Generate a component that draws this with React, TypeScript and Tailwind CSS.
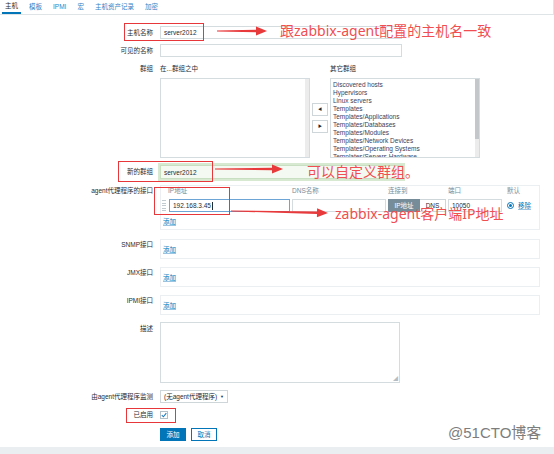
import React from "react";

const sans = "font-['Liberation_Sans','Noto_Sans_CJK_SC',sans-serif]";
const note = "font-['Noto_Sans','Noto_Sans_CJK_SC',sans-serif]";

const tabs = ["主机", "模板", "IPMI", "宏", "主机资产记录", "加密"];

const otherGroups = [
  "Discovered hosts",
  "Hypervisors",
  "Linux servers",
  "Templates",
  "Templates/Applications",
  "Templates/Databases",
  "Templates/Modules",
  "Templates/Network Devices",
  "Templates/Operating Systems",
  "Templates/Servers Hardware",
  "Templates/Virtualization",
];

const inputCls =
  "h-[13px] border border-[#d5dce0] bg-white px-[3px] text-[6.5px] text-[#1f2c33] outline-none";

const Row: React.FC<{
  label: React.ReactNode;
  labelClass?: string;
  className?: string;
  children: React.ReactNode;
}> = ({ label, labelClass = "", className = "", children }) => (
  <div className={`flex ${className}`}>
    <div className={`w-[153px] shrink-0 whitespace-nowrap text-right ${labelClass}`}>
      {label}
    </div>
    <div className="ml-[7px] min-w-0 flex-1">{children}</div>
  </div>
);

const AddLink = () => (
  <span className="text-[#0275b8] underline decoration-[#9cc4e0]">添加</span>
);

const EmptyIface = () => (
  <div className="w-[380px] border border-[#eceff1] pb-[4px] pl-[2px] pt-[6px]">
    <AddLink />
  </div>
);

const ListBox: React.FC<{ items: string[]; thumb?: boolean }> = ({ items, thumb }) => (
  <div className="flex h-[80px] w-[150px] border border-[#d5dce0] bg-white">
    <div className="flex-1 overflow-hidden pl-[2px] pt-[2px] text-[#3a3f5c]">
      {items.map((g) => (
        <div key={g} className="whitespace-nowrap">
          {g}
        </div>
      ))}
    </div>
    <div className="w-[4px] bg-[#ececec]">
      {thumb && <div className="h-[60px] bg-[#c4c7ca]" />}
    </div>
  </div>
);

// tapered red annotation arrow
function arrowPoints(x0: number, y0: number, x1: number, y1: number) {
  const dx = x1 - x0;
  const dy = y1 - y0;
  const len = Math.hypot(dx, dy);
  const ux = dx / len;
  const uy = dy / len;
  const nx = -uy;
  const ny = ux;
  const h = 11;
  const bx = x1 - ux * h;
  const by = y1 - uy * h;
  const p = (x: number, y: number, k: number) => `${x + nx * k},${y + ny * k}`;
  return [
    p(x0, y0, 0.4),
    p(bx, by, 1.3),
    p(bx, by, 4.5),
    `${x1},${y1}`,
    p(bx, by, -4.5),
    p(bx, by, -1.3),
    p(x0, y0, -0.4),
  ].join(" ");
}

export default function App() {
  return (
    <div
      className={`relative h-[454px] w-[554px] overflow-hidden bg-white text-[6.5px] leading-[8px] text-[#1f2c33] ${sans}`}
    >
      {/* Tabs */}
      <div className="flex h-[15px] gap-[5px] border-b border-r border-[#dfe4e7] pl-[2px]">
        {tabs.map((t, i) => (
          <div
            key={t}
            className={`flex items-center px-[3px] ${
              i === 0 ? "border-b-2 border-[#0275b8] text-[#1f2c33]" : "text-[#2f83c7]"
            }`}
          >
            {t}
          </div>
        ))}
      </div>

      {/* Form */}
      <Row label="主机名称" className="mt-[11px] items-center">
        <input className={`${inputCls} w-[242px]`} defaultValue="server2012" readOnly />
      </Row>

      <Row label="可见的名称" className="mt-[5px] items-center">
        <input className={`${inputCls} w-[242px]`} readOnly />
      </Row>

      <Row label="群组" className="mt-[8px]">
        <div className="flex">
          <div>
            <div className="mb-[5px]">在...群组之中</div>
            <ListBox items={[]} />
          </div>
          <div className="mx-[2px] mt-[13px] flex flex-col justify-center gap-[4px]">
            <div className="flex h-[13px] w-[16px] items-center justify-center border border-[#cfd6da] text-[4px]">
              ◀
            </div>
            <div className="flex h-[13px] w-[16px] items-center justify-center border border-[#cfd6da] text-[4px]">
              ▶
            </div>
          </div>
          <div>
            <div className="mb-[5px]">其它群组</div>
            <ListBox items={otherGroups} thumb />
          </div>
        </div>
      </Row>

      <Row label="新的群组" className="mt-[5px] items-center">
        <div className="-ml-[2px] w-[247px] bg-[#d7ead1] p-[2px]">
          <input
            className="h-[14px] w-full border border-[#c9dfc2] bg-[#f4faf2] px-[3px] text-[6.5px] outline-none"
            defaultValue="server2012"
            readOnly
          />
        </div>
      </Row>

      <Row label="agent代理程序的接口" labelClass="pt-[2px]" className="mt-[4px]">
        <div className="w-[380px] border border-[#eceff1] pb-[3px] pl-[1px] pt-[1px]">
          <div className="flex text-[#768d99]">
            <div className="w-[4px]" />
            <div className="ml-[2px] w-[122px]">IP地址</div>
            <div className="ml-[2px] w-[94px]">DNS名称</div>
            <div className="ml-[2px] w-[58px]">连接到</div>
            <div className="ml-[2px] w-[54px]">端口</div>
            <div className="ml-[5px]">默认</div>
          </div>
          <div className="mt-[4px] flex items-center">
            <div className="flex h-[13px] w-[4px] flex-col justify-between py-[1px]">
              {[0, 1, 2, 3, 4].map((d) => (
                <div key={d} className="h-[1px] w-[4px] bg-[#c2cbd0]" />
              ))}
            </div>
            <div className="ml-[3px] flex h-[13px] w-[121px] items-center border border-[#6da6d6] bg-white px-[3px]">
              192.168.3.45<span className="ml-[1px] h-[8px] w-[1px] bg-[#1f2c33]" />
            </div>
            <input className={`${inputCls} ml-[2px] w-[94px]`} readOnly />
            <div className="ml-[2px] flex h-[13px] w-[58px]">
              <div className="flex w-[32px] items-center justify-center bg-[#768d99] text-white">
                IP地址
              </div>
              <div className="flex flex-1 items-center justify-center border border-l-0 border-[#cfd6da]">
                DNS
              </div>
            </div>
            <input className={`${inputCls} ml-[2px] w-[54px]`} defaultValue="10050" readOnly />
            <div className="ml-[5px] flex h-[7px] w-[7px] items-center justify-center rounded-full border border-[#0275b8]">
              <div className="h-[3px] w-[3px] rounded-full bg-[#0275b8]" />
            </div>
            <span className="ml-[4px] text-[#0275b8] underline decoration-[#9cc4e0]">移除</span>
          </div>
          <div className="mt-[6px] pl-[1px]">
            <AddLink />
          </div>
        </div>
      </Row>

      <Row label="SNMP接口" labelClass="pt-[2px]" className="mt-[9px]">
        <EmptyIface />
      </Row>
      <Row label="JMX接口" labelClass="pt-[2px]" className="mt-[8px]">
        <EmptyIface />
      </Row>
      <Row label="IPMI接口" labelClass="pt-[2px]" className="mt-[8px]">
        <EmptyIface />
      </Row>

      <Row label="描述" labelClass="pt-[3px]" className="mt-[7px]">
        <div className="flex h-[61px] w-[240px] items-end justify-end border border-[#d5dce0] bg-white p-[1px]">
          <span className="text-[5px] leading-[5px] text-[#b5bdc2]">◢</span>
        </div>
      </Row>

      <Row label="由agent代理程序监测" className="mt-[7px] items-center">
        <div className="flex h-[13px] w-[68px] items-center justify-between border border-[#cfd6da] px-[3px]">
          <span>(无agent代理程序)</span>
          <span className="text-[4px]">▼</span>
        </div>
      </Row>

      <Row label="已启用" className="mt-[8px] items-center">
        <div className="flex h-[8px] w-[8px] items-center justify-center border border-[#b4c0c7] bg-white">
          <svg width="6" height="6" viewBox="0 0 6 6">
            <polyline points="0.8,3.2 2.4,4.8 5.3,1.2" fill="none" stroke="#1f7bc0" strokeWidth="1.1" />
          </svg>
        </div>
      </Row>

      <Row label="" className="mt-[9px]">
        <div className="flex gap-[5px]">
          <div className="flex h-[13px] w-[26px] items-center justify-center border border-[#0275b8] bg-[#0275b8] text-white">
            添加
          </div>
          <div className="flex h-[13px] w-[26px] items-center justify-center border border-[#0275b8] bg-white text-[#0275b8]">
            取消
          </div>
        </div>
      </Row>

      <div className="mt-[6px] h-[20px] bg-[#ebeef0]" />

      {/* Watermark */}
      <div className="absolute left-[448px] top-[425px] text-[15px] leading-[16px] text-[#7d7d7d] font-['Liberation_Sans','Noto_Sans_CJK_SC',sans-serif]">
        @51CTO博客
      </div>

      {/* Annotations */}
      <div className="pointer-events-none absolute inset-0">
        <div className="absolute left-[124px] top-[23px] h-[18px] w-[80px] border-[1.5px] border-[#e8373a]" />
        <div className="absolute left-[118px] top-[161px] h-[21px] w-[95px] border-[1.5px] border-[#e8373a]" />
        <div className="absolute left-[154px] top-[187px] h-[28px] w-[76px] border-[1.5px] border-[#e8373a]" />
        <div className="absolute left-[126px] top-[408px] h-[15px] w-[50px] border-[1.5px] border-[#e8373a]" />

        <svg className="absolute left-0 top-0" width="554" height="454">
          <polygon points={arrowPoints(217, 31, 267, 31)} fill="#e8393b" />
          <polygon points={arrowPoints(215, 169, 283, 169)} fill="#e8393b" />
          <polygon points={arrowPoints(231, 211, 328, 213)} fill="#e8393b" />
        </svg>

        <div className={`absolute left-[280px] top-[24px] whitespace-nowrap text-[14px] leading-[14px] text-[#f04e50] ${note}`}>
          跟zabbix-agent配置的主机名一致
        </div>
        <div className={`absolute left-[307px] top-[165px] whitespace-nowrap text-[14px] leading-[14px] text-[#f04e50] ${note}`}>
          可以自定义群组。
        </div>
        <div className={`absolute left-[335px] top-[207px] whitespace-nowrap text-[14px] leading-[14px] text-[#f04e50] ${note}`}>
          zabbix-agent客户端IP地址
        </div>
      </div>
    </div>
  );
}
